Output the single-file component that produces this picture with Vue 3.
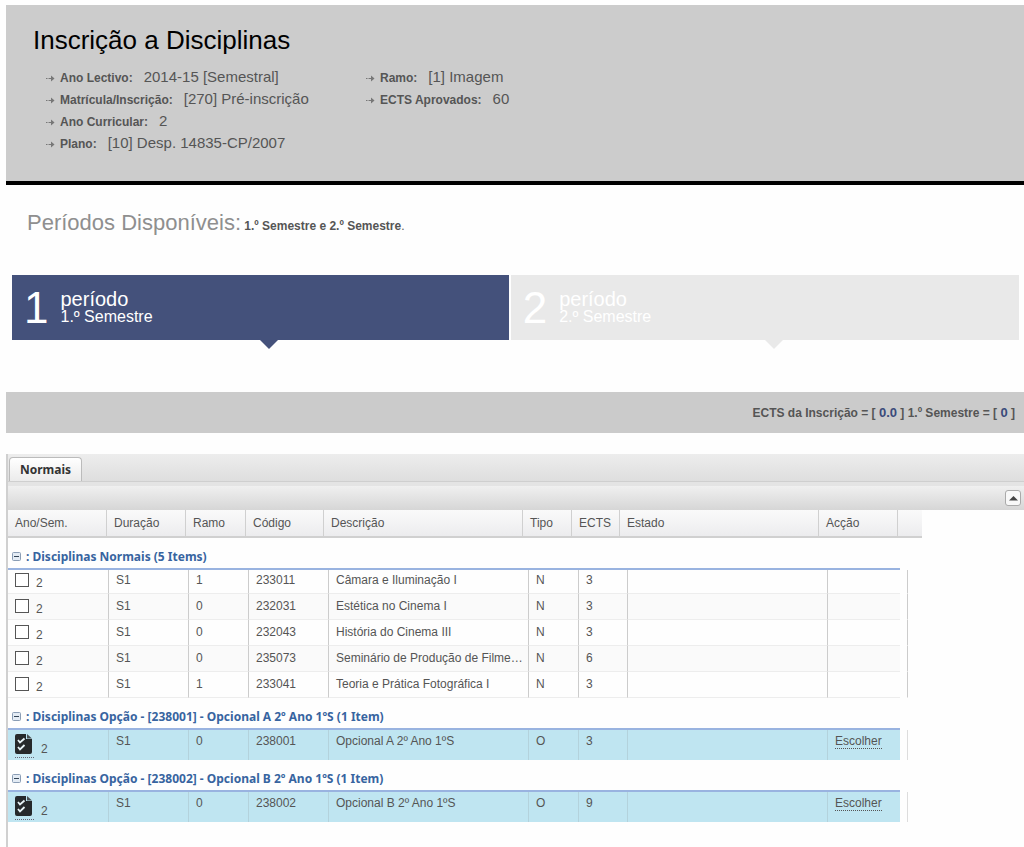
<script setup>
import { ref } from 'vue'

const infoColumns = [
  [
    { label: 'Ano Lectivo:', value: '2014-15 [Semestral]' },
    { label: 'Matrícula/Inscrição:', value: '[270] Pré-inscrição' },
    { label: 'Ano Curricular:', value: '2' },
    { label: 'Plano:', value: '[10] Desp. 14835-CP/2007' },
  ],
  [
    { label: 'Ramo:', value: '[1] Imagem' },
    { label: 'ECTS Aprovados:', value: '60' },
  ],
]

const periods = [
  { number: 1, name: '1.º Semestre' },
  { number: 2, name: '2.º Semestre' },
]
const activePeriod = ref(1)

const headers = ['Ano/Sem.', 'Duração', 'Ramo', 'Código', 'Descrição', 'Tipo', 'ECTS', 'Estado', 'Acção']

const groups = [
  {
    title: 'Disciplinas Normais (5 Items)',
    optional: false,
    rows: [
      { ramo: 1, code: '233011', name: 'Câmara e Iluminação I', type: 'N', ects: 3 },
      { ramo: 0, code: '232031', name: 'Estética no Cinema I', type: 'N', ects: 3 },
      { ramo: 0, code: '232043', name: 'História do Cinema III', type: 'N', ects: 3 },
      { ramo: 0, code: '235073', name: 'Seminário de Produção de Filmes e Vídeo', type: 'N', ects: 6 },
      { ramo: 1, code: '233041', name: 'Teoria e Prática Fotográfica I', type: 'N', ects: 3 },
    ],
  },
  {
    title: 'Disciplinas Opção - [238001] - Opcional A 2º Ano 1ºS (1 Item)',
    optional: true,
    rows: [{ ramo: 0, code: '238001', name: 'Opcional A 2º Ano 1ºS', type: 'O', ects: 3 }],
  },
  {
    title: 'Disciplinas Opção - [238002] - Opcional B 2º Ano 1ºS (1 Item)',
    optional: true,
    rows: [{ ramo: 0, code: '238002', name: 'Opcional B 2º Ano 1ºS', type: 'O', ects: 9 }],
  },
]
</script>

<template>
  <main class="page">
    <header class="summary">
      <h1>Inscrição a Disciplinas</h1>
      <div class="info">
        <ul v-for="(column, c) in infoColumns" :key="c">
          <li v-for="item in column" :key="item.label">
            <svg class="arrow" viewBox="0 0 9 7" aria-hidden="true">
              <path d="M0 3.5h1.5M2.5 3.5h3.5" stroke="#777" />
              <path d="M5 0.5L8.5 3.5L5 6.5z" fill="#777" />
            </svg>
            <b>{{ item.label }}</b><span>{{ item.value }}</span>
          </li>
        </ul>
      </div>
    </header>

    <p class="available">
      <span class="lead">Períodos Disponíveis:</span> <b>1.º Semestre e 2.º Semestre</b>.
    </p>

    <nav class="periods">
      <button
        v-for="p in periods"
        :key="p.number"
        type="button"
        :class="['period', { active: p.number === activePeriod }]"
        @click="activePeriod = p.number"
      >
        <span class="number">{{ p.number }}</span>
        <span class="caption"><span class="word">período</span><span>{{ p.name }}</span></span>
      </button>
    </nav>

    <p class="totals">
      ECTS da Inscrição = [ <strong>0.0</strong> ] 1.º Semestre = [ <strong>0</strong> ]
    </p>

    <section class="panel">
      <div class="tabs"><button type="button" class="tab">Normais</button></div>
      <div class="toolbar">
        <button type="button" class="collapse" aria-label="Recolher">
          <svg viewBox="0 0 9 5" aria-hidden="true"><path d="M0 4.5L4.5 0L9 4.5z" fill="#444" /></svg>
        </button>
      </div>

      <table class="head">
        <colgroup>
          <col class="h1" /><col class="h2" /><col class="h3" /><col class="h4" /><col class="h5" />
          <col class="h6" /><col class="h7" /><col class="h8" /><col class="h9" /><col class="h10" />
        </colgroup>
        <thead>
          <tr>
            <th v-for="h in headers" :key="h" scope="col">{{ h }}</th>
            <td></td>
          </tr>
        </thead>
      </table>

      <template v-for="group in groups" :key="group.title">
        <h2 class="group">
          <svg class="minus" viewBox="0 0 9 9" aria-hidden="true">
            <rect x="0.5" y="0.5" width="8" height="8" rx="1" fill="#e3ebf4" stroke="#8a9db5" />
            <path d="M2 4.5h5" stroke="#345" />
          </svg>
          <span>: {{ group.title }}</span>
        </h2>
        <table :class="['body', { optional: group.optional }]">
          <colgroup>
            <col class="b1" /><col class="b2" /><col class="b3" /><col class="b4" /><col class="b5" />
            <col class="b6" /><col class="b7" /><col class="b8" /><col class="b9" /><col class="b10" />
          </colgroup>
          <tbody>
            <tr v-for="row in group.rows" :key="row.code">
              <td class="pick">
                <span class="pick-box">
                  <a v-if="group.optional" href="#" class="list-link" aria-label="Escolher opção">
                    <svg viewBox="0 0 17 20" aria-hidden="true">
                      <path d="M2 0h9v5h6v13a2 2 0 0 1-2 2H2a2 2 0 0 1-2-2V2a2 2 0 0 1 2-2z" fill="#26292b" />
                      <path d="M12 0l5 4.5h-5z" fill="#4a5052" />
                      <path d="M3 6l2 2.5L9.500 4.500M3 13l2 2.500L9.500 11" fill="none" stroke="#e8f3f6" stroke-width="1.800" />
                    </svg>
                  </a>
                  <input v-else :id="'c' + row.code" type="checkbox" />
                  <label :for="'c' + row.code">2</label>
                </span>
              </td>
              <td>S1</td>
              <td>{{ row.ramo }}</td>
              <td>{{ row.code }}</td>
              <td>{{ row.name }}</td>
              <td>{{ row.type }}</td>
              <td>{{ row.ects }}</td>
              <td></td>
              <td class="action"><a v-if="group.optional" href="#">Escolher</a></td>
              <td class="gutter"></td>
            </tr>
          </tbody>
        </table>
      </template>
    </section>
  </main>
</template>

<style>
body {
  background: #fefefe;
}
</style>

<style scoped>
.page {
  box-sizing: border-box;
  min-height: 100vh;
  padding: 5px 0 0 6px;
  display: flex;
  flex-direction: column;
  font-family: "Liberation Sans", Arial, sans-serif;
  font-size: 12px;
  color: #555;
}
h1, h2, p, ul {
  margin: 0;
  padding: 0;
  font-weight: normal;
}
button {
  font-family: inherit;
  border: 0;
  padding: 0;
  cursor: pointer;
}

.summary {
  background: #ccc;
  border-bottom: 4px solid #000;
  padding: 20px 27px 27px;
}
h1 {
  font-size: 26px;
  line-height: 30px;
  color: #000;
}
.info {
  display: flex;
  padding: 11px 0 0 13px;
}
.info ul {
  list-style: none;
  width: 320px;
}
.info li {
  display: flex;
  align-items: baseline;
  height: 22px;
  line-height: 22px;
}
.arrow {
  width: 9px;
  height: 7px;
  margin-right: 5px;
}
.info span {
  margin-left: 11px;
  font-size: 15px;
}

.available {
  padding: 24px 21px 0;
  line-height: 28px;
}
.lead {
  font-size: 22px;
  color: #8f8f8f;
}

.periods {
  display: flex;
  gap: 2px;
  margin: 35px 5px 0 6px;
}
.period {
  position: relative;
  flex: 509;
  display: flex;
  align-items: center;
  gap: 12px;
  height: 65px;
  padding-left: 12px;
  background: #e9e9e9;
  color: #fff;
  text-align: left;
}
.period.active {
  flex: 497;
  background: #44517b;
}
.period::after {
  content: "";
  position: absolute;
  top: 100%;
  left: 50%;
  border: 9px solid transparent;
  border-top-color: #e9e9e9;
  border-bottom: 0;
}
.period.active::after {
  border-top-color: #44517b;
}
.number {
  font-size: 44px;
  line-height: 64px;
}
.caption {
  display: flex;
  flex-direction: column;
  font-size: 16px;
  line-height: 18px;
}
.word {
  font-size: 20px;
}

.totals {
  margin-top: 52px;
  padding-right: 9px;
  background: #cbcbcb;
  line-height: 41px;
  height: 41px;
  text-align: right;
  font-weight: bold;
}
.totals strong {
  color: #3a4a7a;
  font-size: 13px;
}

.panel {
  flex: 1;
  margin-top: 21px;
  border-left: 2px solid #d0d0d0;
}
.tabs {
  display: flex;
  align-items: flex-end;
  height: 27px;
  background: linear-gradient(#ededed, #dedede);
  border-bottom: 1px solid #cfcfcf;
}
.tab {
  height: 24px;
  margin-left: 1px;
  padding: 0 10px;
  border: 1px solid #bbb;
  border-bottom: 0;
  border-radius: 4px 4px 0 0;
  background: linear-gradient(#fff, #ebebeb);
  font: bold 12px "Noto Sans", sans-serif;
  color: #333;
}
.toolbar {
  display: flex;
  justify-content: flex-end;
  align-items: center;
  height: 24px;
  padding-right: 3px;
  border-top: 4px solid #e4e4e4;
  background: linear-gradient(#f0f0f0, #d6d6d6);
}
.collapse {
  display: flex;
  align-items: center;
  justify-content: center;
  width: 16px;
  height: 16px;
  border: 1px solid #aaa;
  border-radius: 3px;
  background: #f8f8f8;
}
.collapse svg {
  width: 9px;
  height: 5px;
}

table {
  table-layout: fixed;
  border-collapse: separate;
  border-spacing: 0;
}
th, td {
  box-sizing: border-box;
  padding: 0 0 0 7px;
  text-align: left;
  font-weight: normal;
  white-space: nowrap;
  overflow: hidden;
  text-overflow: ellipsis;
}
.head {
  width: 914px;
  border-bottom: 2px solid #d0d0d0;
  background: linear-gradient(#fafafa, #ececee);
}
.head th {
  height: 26px;
  border-right: 1px solid #d0d0d0;
}
.h1 { width: 99px; }
.h2, .h9 { width: 79px; }
.h3 { width: 60px; }
.h4 { width: 78px; }
.h5, .h8 { width: 199px; }
.h6 { width: 49px; }
.h7 { width: 48px; }
.h10 { width: 24px; }

.group {
  box-sizing: border-box;
  display: flex;
  align-items: center;
  gap: 5px;
  width: 892px;
  height: 32px;
  padding: 6px 0 0 4px;
  border-bottom: 2px solid #99b3e0;
  font: bold 12px "Noto Sans", sans-serif;
  color: #3764a0;
}
.minus {
  width: 9px;
  height: 9px;
}

.body {
  width: 900px;
}
.b1 { width: 101px; }
.b2, .b4 { width: 80px; }
.b3 { width: 60px; }
.b5, .b8 { width: 200px; }
.b6 { width: 50px; }
.b7 { width: 49px; }
.b9 { width: 72px; }
.b10 { width: 8px; }
.body td {
  height: 26px;
  padding-top: 5px;
  line-height: 14px;
  vertical-align: top;
  border-right: 1px solid #ccc;
  border-bottom: 1px solid #ededed;
}
.body tr:first-child td {
  height: 24px;
  padding-top: 3px;
}
.body tr:nth-child(even) td {
  background: #fafafa;
}
.body td.action {
  border-right: 0;
}
.body td.gutter,
.body tr:nth-child(even) td.gutter {
  background: none;
  border-bottom-color: transparent;
}
.pick-box {
  display: flex;
  align-items: flex-start;
  gap: 7px;
}
.pick-box label {
  padding-top: 3px;
}
input {
  appearance: none;
  box-sizing: border-box;
  width: 14px;
  height: 14px;
  margin: 0;
  border: 1px solid #555;
  background: #fff;
}
.body.optional tr td {
  height: 30px;
  padding-top: 4px;
  border-right-color: #b3d2dc;
  border-bottom: 0;
  background: #bfe5f1;
}
.body.optional tr td.gutter {
  background: none;
  border-right-color: #ddd;
}
.optional .pick-box label {
  padding-top: 8px;
}
.list-link {
  width: 19px;
  height: 23px;
  border-bottom: 1px dotted #667;
}
.list-link svg {
  display: block;
  width: 17px;
  height: 20px;
}
.action a {
  color: #555;
  text-decoration: none;
  border-bottom: 1px dotted #555;
}
</style>
